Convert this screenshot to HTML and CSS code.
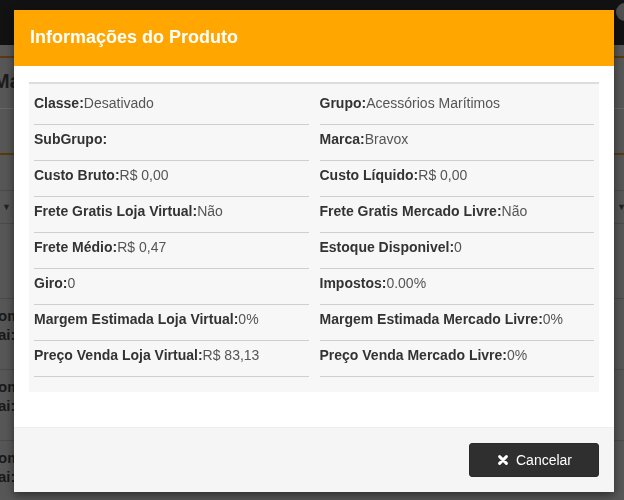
FILE: index.html
```html
<!DOCTYPE html>
<html lang="pt-BR">
<head>
<meta charset="utf-8">
<title>Informações do Produto</title>
<link rel="stylesheet" href="styles.css">
</head>
<body>
<div class="page">
  <div class="navbar"><span class="avatar"></span></div>
  <div class="subbar"></div>
  <div class="accent"></div>
  <div class="page-title"><span>Ma</span></div>
  <div class="spacer s44"></div>
  <div class="accent"></div>
  <div class="spacer s35 lined"></div>
  <div class="filter-row lined"><span class="caret">▼</span><span class="caret">▼</span></div>
  <div class="spacer s74 lined"></div>
  <div class="list-row lined"><span>om</span><span>ai:</span></div>
  <div class="list-row lined"><span>om</span><span>ai:</span></div>
  <div class="list-row"><span>om</span><span>ai:</span></div>
</div>

<div class="modal">
  <div class="modal-header">
    <h4 class="modal-title">Informações do Produto</h4>
  </div>
  <div class="modal-body">
    <div class="info-table">
      <div class="cell"><b>Classe:</b>Desativado</div>
      <div class="cell"><b>Grupo:</b>Acessórios Marítimos</div>
      <div class="cell"><b>SubGrupo:</b></div>
      <div class="cell"><b>Marca:</b>Bravox</div>
      <div class="cell"><b>Custo Bruto:</b>R$ 0,00</div>
      <div class="cell"><b>Custo Líquido:</b>R$ 0,00</div>
      <div class="cell"><b>Frete Gratis Loja Virtual:</b>Não</div>
      <div class="cell"><b>Frete Gratis Mercado Livre:</b>Não</div>
      <div class="cell"><b>Frete Médio:</b>R$ 0,47</div>
      <div class="cell"><b>Estoque Disponivel:</b>0</div>
      <div class="cell"><b>Giro:</b>0</div>
      <div class="cell"><b>Impostos:</b>0.00%</div>
      <div class="cell"><b>Margem Estimada Loja Virtual:</b>0%</div>
      <div class="cell"><b>Margem Estimada Mercado Livre:</b>0%</div>
      <div class="cell"><b>Preço Venda Loja Virtual:</b>R$ 83,13</div>
      <div class="cell"><b>Preço Venda Mercado Livre:</b>0%</div>
    </div>
  </div>
  <div class="modal-footer">
    <button class="btn-cancel" type="button">
      <svg class="icon-times" width="10" height="10" viewBox="0 0 10 10" aria-hidden="true">
        <path d="M1.6 1.6 L8.4 8.4 M8.4 1.6 L1.6 8.4" stroke="#fff" stroke-width="2.9" stroke-linecap="round"/>
      </svg>
      <span>Cancelar</span>
    </button>
  </div>
</div>
</body>
</html>
```

FILE: styles.css
```css
* { box-sizing: border-box; }

html, body {
  margin: 0;
  padding: 0;
}

body {
  font-family: "Liberation Sans", Arial, sans-serif;
  font-size: 14px;
  background: #575757;
  height: 500px;
  overflow: hidden;
}

/* ---------- dimmed background page ---------- */
.page {
  width: 624px;
  height: 500px;
  background: #575757;
  overflow: hidden;
}

.navbar {
  height: 45px;
  background: #121212;
  display: flex;
  justify-content: flex-end;
  align-items: flex-start;
  padding-top: 3px;
}

.avatar {
  width: 18px;
  height: 18px;
  border-radius: 50%;
  background: #4f4f4f;
  margin-right: -10px;
}

.subbar {
  height: 11px;
}

.accent {
  height: 2px;
  background: #5a3a0e;
}

.page-title {
  height: 51px;
  border-bottom: 1px solid #676767;
  display: flex;
  align-items: center;
  font-weight: bold;
  font-size: 20px;
  color: #1c1c1c;
}

.page-title span {
  margin-left: -7px;
  margin-top: -4px;
}

.spacer.s44 { height: 44px; }
.spacer.s35 { height: 36px; }
.spacer.s74 { height: 75px; }

.lined {
  border-bottom: 1px solid #4b4b4b;
}

.filter-row {
  height: 33px;
  display: flex;
  justify-content: space-between;
  align-items: center;
  padding: 0 0 0 2px;
  color: #222;
  font-size: 9px;
}

.filter-row .caret:last-child {
  margin-right: -2px;
}

.list-row {
  height: 71px;
  display: flex;
  flex-direction: column;
  padding-top: 7px;
  color: #1a1a1a;
  font-weight: bold;
  font-size: 15px;
  line-height: 19px;
  margin-left: -2px;
}

/* ---------- modal ---------- */
.modal {
  position: fixed;
  left: 14px;
  top: 10px;
  width: 600px;
  background: #fff;
  box-shadow: 0 3px 9px rgba(0, 0, 0, 0.5);
}

.modal-header {
  background: #ffa600;
  padding: 14px 15px 16px 16px;
}

.modal-title {
  margin: 0;
  color: #fff;
  font-size: 18px;
  line-height: 26px;
  font-weight: bold;
}

.modal-body {
  padding: 16px 15px 35px 15px;
}

.info-table {
  background: #f7f7f7;
  border-top: 2px solid #dddddd;
  padding: 5px 5px 15px 5px;
  display: grid;
  grid-template-columns: 1fr 1fr;
  column-gap: 11px;
}

.cell {
  padding: 4px 0 11px 0;
  line-height: 20px;
  border-bottom: 1px solid #cfcfcf;
  color: #555;
  white-space: nowrap;
}

.cell b {
  color: #333;
  font-weight: bold;
}

.modal-footer {
  background: #f5f5f5;
  border-top: 1px solid #eeeeee;
  padding: 15px;
  display: flex;
  justify-content: flex-end;
}

.btn-cancel {
  width: 130px;
  height: 34px;
  background: #2f2f2f;
  color: #fff;
  border: 1px solid #2a2a2a;
  border-radius: 3px;
  font-family: "Liberation Sans", Arial, sans-serif;
  font-size: 14px;
  display: flex;
  align-items: center;
  justify-content: center;
  gap: 8px;
  padding: 0 0 0 2px;
  cursor: pointer;
}

.icon-times {
  display: block;
}
```
